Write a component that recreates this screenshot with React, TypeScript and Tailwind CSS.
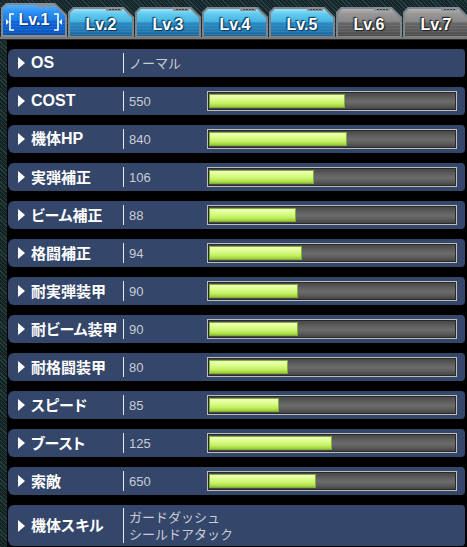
import React from "react";

type Row = { label: string; value: string; fill?: number };

const rows: Row[] = [
  { label: "OS", value: "ノーマル" },
  { label: "COST", value: "550", fill: 136 },
  { label: "機体HP", value: "840", fill: 138 },
  { label: "実弾補正", value: "106", fill: 105 },
  { label: "ビーム補正", value: "88", fill: 87 },
  { label: "格闘補正", value: "94", fill: 93 },
  { label: "耐実弾装甲", value: "90", fill: 89 },
  { label: "耐ビーム装甲", value: "90", fill: 89 },
  { label: "耐格闘装甲", value: "80", fill: 79 },
  { label: "スピード", value: "85", fill: 70 },
  { label: "ブースト", value: "125", fill: 123 },
  { label: "索敵", value: "650", fill: 107 },
];

const Tri = () => (
  <svg width="7" height="12" viewBox="0 0 7 12" className="shrink-0">
    <polygon points="0,0 7,6 0,12" fill="#ffffff" />
  </svg>
);

const Dots = () => (
  <div className="absolute top-0 right-[12px] w-[16px] h-[4px] bg-[#8a9095] flex flex-wrap gap-[1px] justify-center items-center px-[2px]">
    <span className="w-[2px] h-[1px] bg-[#3a3f44]" />
    <span className="w-[2px] h-[1px] bg-[#3a3f44]" />
    <span className="w-[2px] h-[1px] bg-[#3a3f44]" />
    <span className="w-[2px] h-[1px] bg-[#3a3f44]" />
  </div>
);

function Tab({ label, kind }: { label: string; kind: "blue" | "gray" }) {
  const inner =
    kind === "blue"
      ? "bg-[linear-gradient(to_bottom,#9be6fb_0%,#62caef_18%,#48b6e2_46%,#2a8dc4_50%,#2379b2_80%,#1d6497_100%)]"
      : "bg-[linear-gradient(to_bottom,#b4b4b4_0%,#979797_18%,#888888_46%,#686868_50%,#5a5a5a_80%,#4a4a4a_100%)]";
  const shadow =
    kind === "blue"
      ? "[text-shadow:0_0_2px_#0b3a5c,1px_1px_1px_#0b3a5c,-1px_-1px_1px_#0b3a5c]"
      : "[text-shadow:0_0_2px_#222,1px_1px_1px_#222,-1px_-1px_1px_#222]";
  return (
    <div className="relative w-[66px] h-[30px] mt-[7px] shrink-0">
      <div className="absolute inset-0 bg-[#7e858b] [clip-path:polygon(0_5px,5px_0,calc(100%_-_10px)_0,100%_10px,100%_100%,0_100%)]" />
      <div
        className={`absolute left-[2px] right-[2px] top-[2px] bottom-[1px] ${inner} [clip-path:polygon(0_4px,4px_0,calc(100%_-_9px)_0,100%_9px,100%_100%,0_100%)]`}
      />
      <div className="absolute left-[2px] right-[2px] top-[15px] bottom-[1px] bg-[repeating-linear-gradient(to_bottom,rgba(255,255,255,0.07)_0_1px,transparent_1px_3px)]" />
      <Dots />
      <div
        className={`absolute inset-0 pt-[6px] flex items-center justify-center text-white font-bold text-[16px] ${shadow}`}
        style={{ fontFamily: '"Liberation Sans", Arial, sans-serif' }}
      >
        {label}
      </div>
    </div>
  );
}

function ActiveTab() {
  return (
    <div className="relative w-[66px] h-[34px] mt-[3px] shrink-0">
      <div className="absolute inset-0 bg-[#858b90] [clip-path:polygon(0_5px,5px_0,calc(100%_-_12px)_0,100%_12px,100%_100%,0_100%)]" />
      <div className="absolute left-[2px] right-[2px] top-[2px] bottom-[2px] bg-[linear-gradient(to_bottom,#4fb0ff_0%,#2a8ff3_25%,#1f7fe8_48%,#1066d8_52%,#0c5cc8_85%,#0a50b0_100%)] [clip-path:polygon(0_4px,4px_0,calc(100%_-_11px)_0,100%_11px,100%_100%,0_100%)]" />
      <div className="absolute left-[2px] right-[2px] top-[17px] bottom-[2px] bg-[repeating-linear-gradient(to_bottom,rgba(255,255,255,0.07)_0_1px,transparent_1px_3px)]" />
      <div className="absolute top-0 right-[14px] w-[16px] h-[4px] bg-[#8a9095]" />
      <svg className="absolute left-[4px] top-[10px]" width="10" height="18" viewBox="0 0 10 18">
        <path d="M9 1 H5 V17 H9" stroke="#fff" strokeWidth="1.6" fill="none" />
        <polygon points="1,6 4,9 1,12" fill="#fff" />
      </svg>
      <svg className="absolute right-[4px] top-[10px]" width="10" height="18" viewBox="0 0 10 18">
        <path d="M1 1 H5 V17 H1" stroke="#fff" strokeWidth="1.6" fill="none" />
        <polygon points="9,6 6,9 9,12" fill="#fff" />
      </svg>
      <div
        className="absolute inset-0 flex items-center justify-center text-white font-bold text-[16px] [text-shadow:0_0_2px_#083a80,1px_1px_1px_#083a80]"
        style={{ fontFamily: '"Liberation Sans", Arial, sans-serif' }}
      >
        Lv.1
      </div>
    </div>
  );
}

function Bar({ fill }: { fill: number }) {
  return (
    <div className="w-[250px] h-[20px] shrink-0 border border-[#bdbdbd] bg-[#2a2a2a] p-[1px]">
      <div className="relative w-full h-full bg-[linear-gradient(to_bottom,#484848_0%,#5e5e5e_30%,#6c6c6c_55%,#5a5a5a_80%,#444444_100%)]">
        <div
          className="absolute left-0 top-[1px] bottom-[1px] border border-[#7fae3a] bg-[linear-gradient(to_bottom,#f2ffc0_0%,#e2fe98_25%,#d2f97c_50%,#bfec5c_75%,#98ca36_100%)]"
          style={{ width: fill }}
        />
      </div>
    </div>
  );
}

const labelFont = { fontFamily: '"Liberation Sans", "Noto Sans CJK JP", sans-serif' };
const valueFont = { fontFamily: '"Liberation Sans", "Noto Sans CJK JP", sans-serif' };

function Label({ text }: { text: string }) {
  const parts = text.split(/([A-Za-z]+)/).filter((p) => p.length > 0);
  return (
    <span
      className="text-white font-bold text-[15px] leading-none whitespace-nowrap [font-feature-settings:&quot;palt&quot;] [font-kerning:normal]"
      style={labelFont}
    >
      {parts.map((p, i) =>
        /^[A-Za-z]+$/.test(p) ? (
          <span key={i} className="text-[16px]">
            {p}
          </span>
        ) : (
          <span key={i} className="[font-feature-settings:'palt'_1]">
            {p}
          </span>
        )
      )}
    </span>
  );
}

function StatRow({ row }: { row: Row }) {
  return (
    <div className="flex h-[28px] items-center rounded-l-[6px] rounded-r-[4px] bg-[#34466a]">
      <div className="w-[115px] shrink-0 flex items-center gap-[6px] pl-[10px]">
        <Tri />
        <Label text={row.label} />
      </div>
      <div className="w-[1px] h-[20px] bg-[#e6e8ee] shrink-0" />
      <div className="w-[83px] shrink-0 pl-[5px] text-[13px] text-[#c9cdd6] leading-none whitespace-nowrap" style={valueFont}>
        {row.value}
      </div>
      {row.fill !== undefined && <Bar fill={row.fill} />}
    </div>
  );
}

export default function App() {
  return (
    <div className="w-[467px] h-[547px] overflow-hidden bg-black flex flex-col">
      <div className="h-[37px] shrink-0 flex gap-[1px] pl-[1px] bg-[#16252a] bg-[repeating-linear-gradient(45deg,rgba(70,120,125,0.35)_0_1px,transparent_1px_3px)]">
        <ActiveTab />
        <Tab label="Lv.2" kind="blue" />
        <Tab label="Lv.3" kind="blue" />
        <Tab label="Lv.4" kind="blue" />
        <Tab label="Lv.5" kind="blue" />
        <Tab label="Lv.6" kind="gray" />
        <Tab label="Lv.7" kind="gray" />
      </div>
      <div className="h-[2px] shrink-0 bg-[#7a7a7a]" />
      <div className="h-[1px] shrink-0 bg-[#2a2a2a]" />
      <div className="flex flex-1">
        <div className="w-[7px] shrink-0 bg-[#142222] bg-[repeating-linear-gradient(45deg,rgba(70,120,115,0.35)_0_1px,transparent_1px_3px)]" />
        <div className="w-[1px] shrink-0 bg-black" />
        <div className="w-[457px] shrink-0 flex flex-col gap-[10px] pt-[9px]">
          {rows.map((r) => (
            <StatRow key={r.label} row={r} />
          ))}
          <div className="flex h-[41px] items-center rounded-l-[6px] rounded-r-[4px] bg-[#34466a]">
            <div className="w-[115px] shrink-0 flex items-center gap-[6px] pl-[10px]">
              <Tri />
              <Label text="機体スキル" />
            </div>
            <div className="w-[1px] h-[35px] bg-[#e6e8ee] shrink-0" />
            <div className="pl-[5px] text-[13px] text-[#c9cdd6] leading-[17px]" style={valueFont}>
              <div>ガードダッシュ</div>
              <div>シールドアタック</div>
            </div>
          </div>
        </div>
      </div>
    </div>
  );
}
